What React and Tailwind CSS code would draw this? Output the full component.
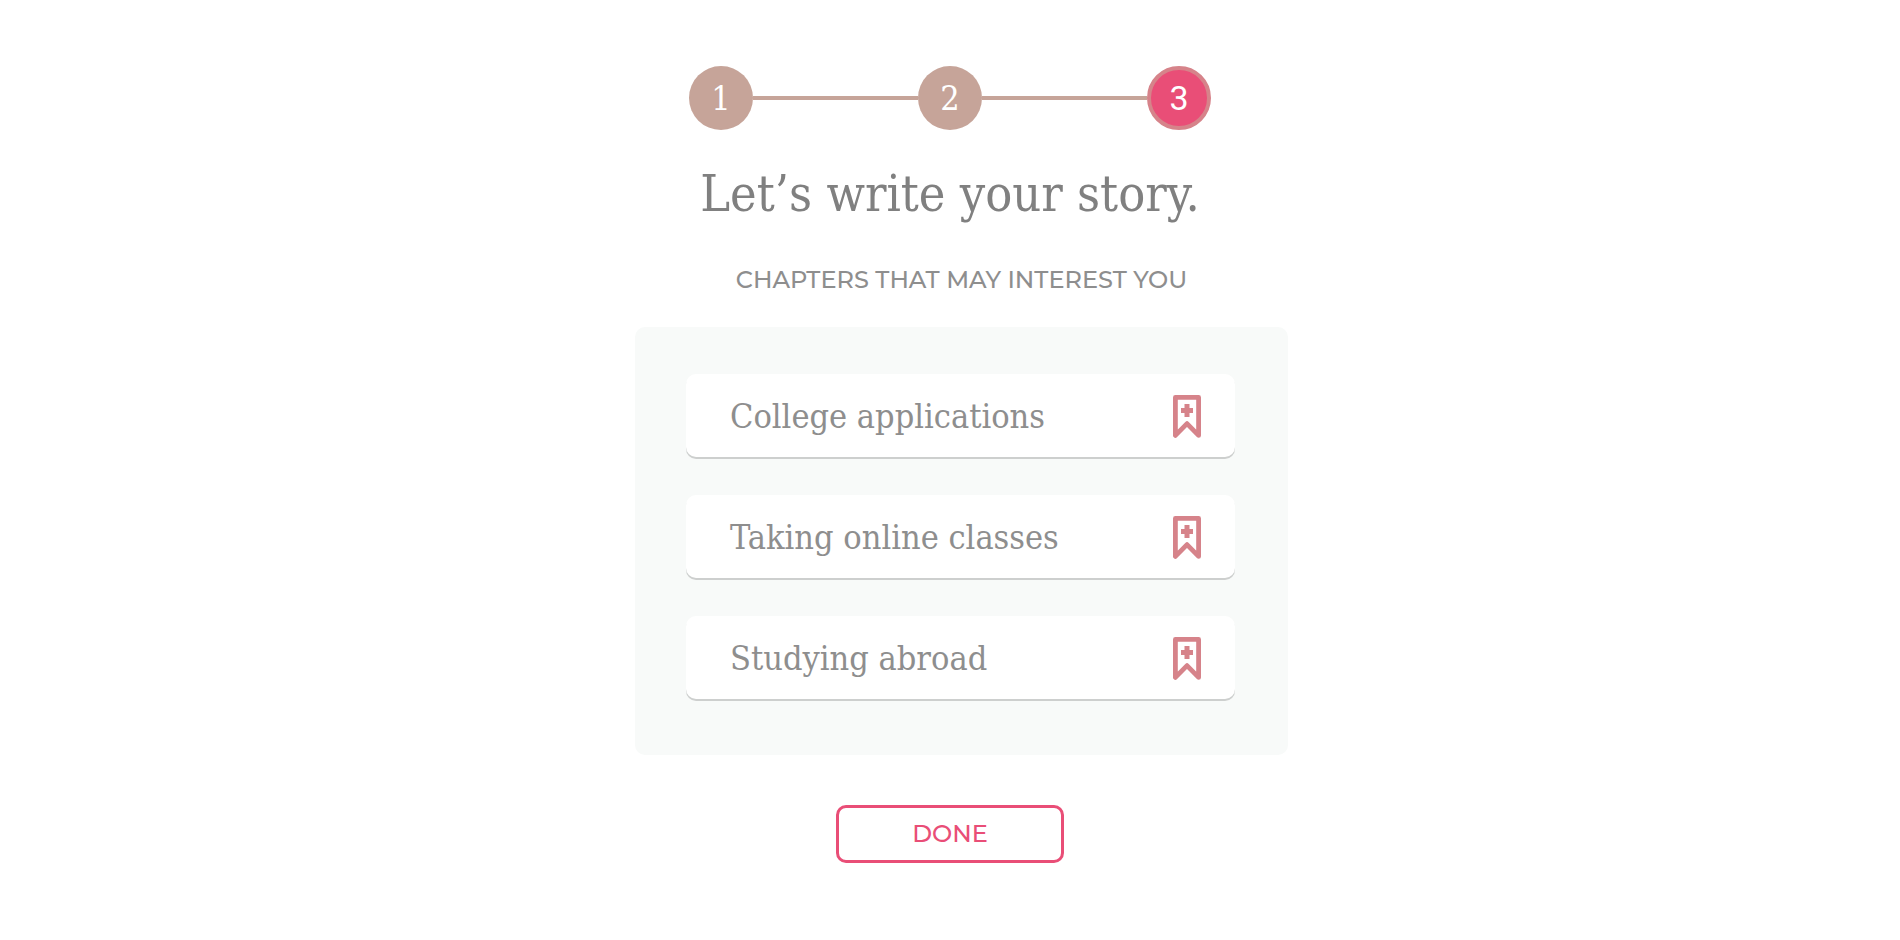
import React from "react";

const steps = [
  { number: 1, current: false },
  { number: 2, current: false },
  { number: 3, current: true },
];

const chapters = ["College applications", "Taking online classes", "Studying abroad"];

function BookmarkAddIcon() {
  return (
    <svg width="28" height="43" viewBox="0 0 28 43" fill="none" aria-hidden="true">
      <path
        d="M2.4 2.4H25.6V40.4L14 28.6L2.4 40.4Z"
        stroke="#d6838a"
        strokeWidth="4.8"
        strokeLinejoin="round"
      />
      <path d="M14 9V22M8 15.5H20" stroke="#d6838a" strokeWidth="5" />
    </svg>
  );
}

function Stepper() {
  return (
    <ol className="flex w-full max-w-[522px] items-center">
      {steps.map((step, i) => (
        <React.Fragment key={step.number}>
          {i > 0 && <li aria-hidden="true" className="h-1 flex-1 bg-[#c6a499]" />}
          <li
            aria-current={step.current ? "step" : undefined}
            className={
              step.current
                ? "flex size-16 items-center justify-center rounded-full border-4 border-[#d6838a] bg-[#e94e77] font-['Roboto_Slab','Roboto',sans-serif] text-[34px] leading-10 text-white"
                : "flex size-16 items-center justify-center rounded-full bg-[#c6a499] font-['Roboto_Slab','DejaVu_Serif_Condensed','DejaVu_Serif',serif] text-[34px] leading-10 text-white"
            }
          >
            {step.number}
          </li>
        </React.Fragment>
      ))}
    </ol>
  );
}

function ChapterCard({ title }) {
  return (
    <li className="flex items-center justify-between rounded-[10px] bg-white pt-[21px] pr-[34px] pb-[19px] pl-11 shadow-[0_2px_0_#cdcfce]">
      <span className="font-['Roboto_Slab','DejaVu_Serif_Condensed','DejaVu_Serif',serif] text-[34px] leading-[43px] text-[#8e8e8e]">
        {title}
      </span>
      <button type="button" aria-label={title} className="shrink-0 cursor-pointer">
        <BookmarkAddIcon />
      </button>
    </li>
  );
}

export default function App() {
  return (
    <main className="flex min-h-screen flex-col items-center bg-white px-6 pt-[66px] pb-16">
      <Stepper />
      <h1 className="mt-8 text-center font-['Roboto_Slab','DejaVu_Serif_Condensed','DejaVu_Serif',serif] text-[50px] leading-16 text-[#808080]">
        Let’s write your story.
      </h1>
      <section className="mt-[38px] flex w-full max-w-[676px] flex-col items-center md:pl-[23px]">
        <h2 className="text-center font-['Montserrat','DejaVu_Sans',sans-serif] text-[24px] leading-8 font-medium text-[#8e8e8e]">
          CHAPTERS THAT MAY INTEREST YOU
        </h2>
        <ul className="mt-[31px] flex w-full flex-col gap-[38px] rounded-[10px] bg-[#f8faf9] pt-[47px] pr-[53px] pb-14 pl-[51px]">
          {chapters.map((title) => (
            <ChapterCard key={title} title={title} />
          ))}
        </ul>
      </section>
      <button
        type="button"
        className="mt-[50px] w-[228px] cursor-pointer rounded-[10px] border-3 border-[#e94e77] pt-2.5 pb-2.5 font-['Montserrat','DejaVu_Sans',sans-serif] text-[24px] leading-8 font-medium text-[#e94e77]"
      >
        DONE
      </button>
    </main>
  );
}
